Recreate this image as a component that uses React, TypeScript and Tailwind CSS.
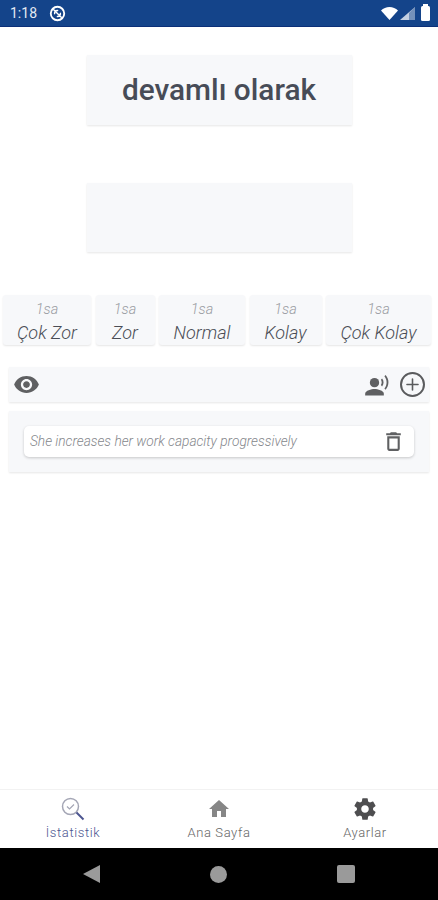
import { Plus } from 'lucide-react'

const levels = [
  { label: 'Çok Zor', width: 'w-[88px]' },
  { label: 'Zor', width: 'w-[59px]' },
  { label: 'Normal', width: 'w-[86px]' },
  { label: 'Kolay', width: 'w-[72px]' },
  { label: 'Çok Kolay', width: 'w-[105px]' },
]

const panel = 'bg-[#f7f8fa] shadow-[0_1px_2px_rgba(0,0,0,0.1)]'

function StatusBar() {
  return (
    <div className="flex h-[27px] items-center justify-between border-b border-[#0b2f78] bg-[#14448a] pl-[10px] pr-[8px] text-white">
      <div className="flex items-center gap-[12px]">
        <span className="text-[14px] leading-none text-[#e4eaf3]">1:18</span>
        <svg width="17" height="17" viewBox="0 0 24 24" fill="none" stroke="#fff" strokeWidth="2.6">
          <circle cx="12" cy="12" r="9.5" />
          <path d="M6 6l12 12M8 13a4 4 0 0 1 5-5M16 11a4 4 0 0 1-5 5" strokeWidth="2" />
        </svg>
      </div>
      <div className="flex items-center gap-[2px]">
        <svg width="17" height="13" viewBox="0 0 17 13">
          <path d="M0 3.6C2.3 1.4 5.2 0 8.5 0S14.700 1.400 17 3.600L8.500 13z" fill="#fff" />
        </svg>
        <svg width="15" height="13" viewBox="0 0 15 13">
          <path d="M15 0v13H0z" fill="#fff" opacity="0.75" />
          <path d="M15 0v13H9V6z" fill="#14448a" opacity="0.45" />
        </svg>
        <div className="relative ml-[4px] h-[15px] w-[9px] rounded-[1.5px] bg-white">
          <div className="absolute -top-[1.500px] left-[2px] h-[2px] w-[5px] bg-white" />
        </div>
      </div>
    </div>
  )
}

function NavBar() {
  return (
    <div className="flex h-[52px] items-center justify-center gap-[110px] bg-black pr-[1px]">
      <div className="h-0 w-0 border-y-[9px] border-r-[17px] border-y-transparent border-r-[#9a9a9a]" />
      <div className="h-[17px] w-[17px] rounded-full bg-[#9a9a9a]" />
      <div className="h-[18px] w-[18px] rounded-[2px] bg-[#9a9a9a]" />
    </div>
  )
}

export default function App() {
  return (
    <div
      className="flex h-[900px] w-[438px] flex-col overflow-hidden bg-white"
      style={{ fontFamily: 'Roboto, "Noto Sans", sans-serif' }}
    >
      <StatusBar />

      <main className="flex-1">
        <div className={`mx-auto mt-[28px] flex h-[70px] w-[265px] items-center justify-center ${panel}`}>
          <h1 className="text-[29.800px] font-medium leading-none text-[#474c57]">devamlı olarak</h1>
        </div>
        <div className={`mx-auto mt-[58px] h-[69px] w-[265px] ${panel}`} />

        {/* zorluk seviyeleri */}
        <div className="mt-[43px] flex gap-[4.500px] pl-[3px]">
          {levels.map((l) => (
            <div key={l.label} className={`flex h-[50px] flex-col items-center rounded-[3px] pt-[7px] ${l.width} ${panel}`}>
              <span className="text-[14.500px] font-light italic leading-[15px] text-[#9a9ca2]">1sa</span>
              <span className="mt-[5px] whitespace-nowrap text-[18px] font-light italic leading-[22px] text-[#4a4d55]">{l.label}</span>
            </div>
          ))}
        </div>

        <div className={`mx-[9px] mt-[22px] flex h-[35px] items-center justify-between pl-[4px] pr-[4px] ${panel}`}>
          <svg width="27" height="27" viewBox="0 0 24 24" fill="#5f6062">
            <path d="M12 4.500C7 4.500 2.730 7.610 1 12c1.730 4.390 6 7.500 11 7.500s9.270-3.110 11-7.500c-1.730-4.390-6-7.500-11-7.500zM12 17c-2.760 0-5-2.240-5-5s2.240-5 5-5 5 2.240 5 5-2.240 5-5 5zm0-8c-1.660 0-3 1.340-3 3s1.340 3 3 3 3-1.340 3-3-1.340-3-3-3z" />
          </svg>
          <div className="flex items-center gap-[8px]">
            <svg width="28" height="28" viewBox="0 0 24 24" fill="#5f6062">
              <circle cx="9" cy="10" r="4" />
              <path d="M9 15.500c-2.670 0-8 1.340-8 4V21h16v-1.500c0-2.660-5.330-4-8-4z" />
              <path d="M15.500 6.500l-1 1.100c.9 1.400.9 3.100 0 4.500l1 1.100c1.700-1.900 1.700-4.800 0-6.700zM18.500 3.500l-1 1c2.500 3 2.500 7.600 0 10.600l1 1c3.300-3.600 3.300-9.100 0-12.600z" />
            </svg>
            <div className="flex h-[25px] w-[25px] items-center justify-center rounded-full border-2 border-[#5a5b5d]">
              <Plus size={19} strokeWidth={2} color="#5a5b5d" />
            </div>
          </div>
        </div>

        <div className={`mx-[9px] mt-[9px] px-[15px] py-[15px] ${panel}`}>
          <div className="flex h-[31px] items-center justify-between rounded-[5px] bg-white pl-[6px] pr-[8px] shadow-[0_1px_3px_rgba(0,0,0,0.2)]">
            <span className="whitespace-nowrap text-[13.700px] font-light italic text-[#85878c]">She increases her work capacity progressively</span>
            <svg width="25" height="25" viewBox="0 0 24 24" fill="#5f6062">
              <path d="M6 19c0 1.100.9 2 2 2h8c1.100 0 2-.9 2-2V7H6v12zM8 9h8v10H8V9zm7.500-5l-1-1h-5l-1 1H5v2h14V4h-3.500z" />
            </svg>
          </div>
        </div>
      </main>

      <footer className="grid h-[59px] grid-cols-3 border-t border-[#f2f2f2] bg-white pt-[6px]">
        <div className="flex flex-col items-center">
          <svg width="26" height="26" viewBox="0 0 26 26" fill="none" className="-ml-[1px]">
            <circle cx="10.500" cy="10.500" r="8" stroke="#a4a6b5" strokeWidth="1.500" />
            <path d="M7 10.500l2.500 2.500 4.500-4.500" stroke="#a4a6b5" strokeWidth="1.200" />
            <path d="M16.500 16.500l7 7" stroke="#4c5590" strokeWidth="2" />
          </svg>
          <span className="mt-[3px] text-[13px] font-light leading-[16px] tracking-[0.6px] text-[#4c5590]">İstatistik</span>
        </div>
        <div className="flex flex-col items-center">
          <svg width="24" height="26" viewBox="0 0 24 24" fill="#868686">
            <path d="M10 20v-6h4v6h5v-8h3L12 3 2 12h3v8z" />
          </svg>
          <span className="mt-[3px] text-[13px] font-light leading-[16px] tracking-[0.6px] text-[#666]">Ana Sayfa</span>
        </div>
        <div className="flex flex-col items-center">
          <svg width="26" height="26" viewBox="0 0 24 24" fill="#4e4e50">
            <path d="M19.430 12.980c.04-.32.070-.64.070-.98s-.03-.66-.07-.98l2.110-1.650c.19-.15.240-.42.120-.64l-2-3.460c-.12-.22-.39-.3-.61-.22l-2.490 1c-.52-.4-1.080-.73-1.690-.98l-.38-2.650C14.460 2.180 14.250 2 14 2h-4c-.25 0-.46.180-.49.420l-.38 2.650c-.61.250-1.170.590-1.690.980l-2.490-1c-.23-.09-.49 0-.61.220l-2 3.460c-.13.220-.07.490.12.640l2.110 1.650c-.04.320-.07.650-.07.980s.03.660.07.980l-2.110 1.650c-.19.150-.24.420-.12.640l2 3.460c.12.220.39.300.61.220l2.490-1c.52.400 1.080.730 1.690.980l.38 2.650c.03.240.24.420.49.420h4c.25 0 .46-.18.49-.42l.38-2.650c.61-.25 1.170-.59 1.690-.98l2.490 1c.23.090.49 0 .61-.22l2-3.460c.12-.22.07-.49-.12-.64l-2.110-1.650zM12 15.500c-1.930 0-3.500-1.570-3.500-3.500s1.570-3.500 3.500-3.500 3.500 1.570 3.500 3.500-1.570 3.500-3.500 3.500z" />
          </svg>
          <span className="mt-[3px] text-[13px] font-light leading-[16px] tracking-[0.6px] text-[#666]">Ayarlar</span>
        </div>
      </footer>

      <NavBar />
    </div>
  )
}
